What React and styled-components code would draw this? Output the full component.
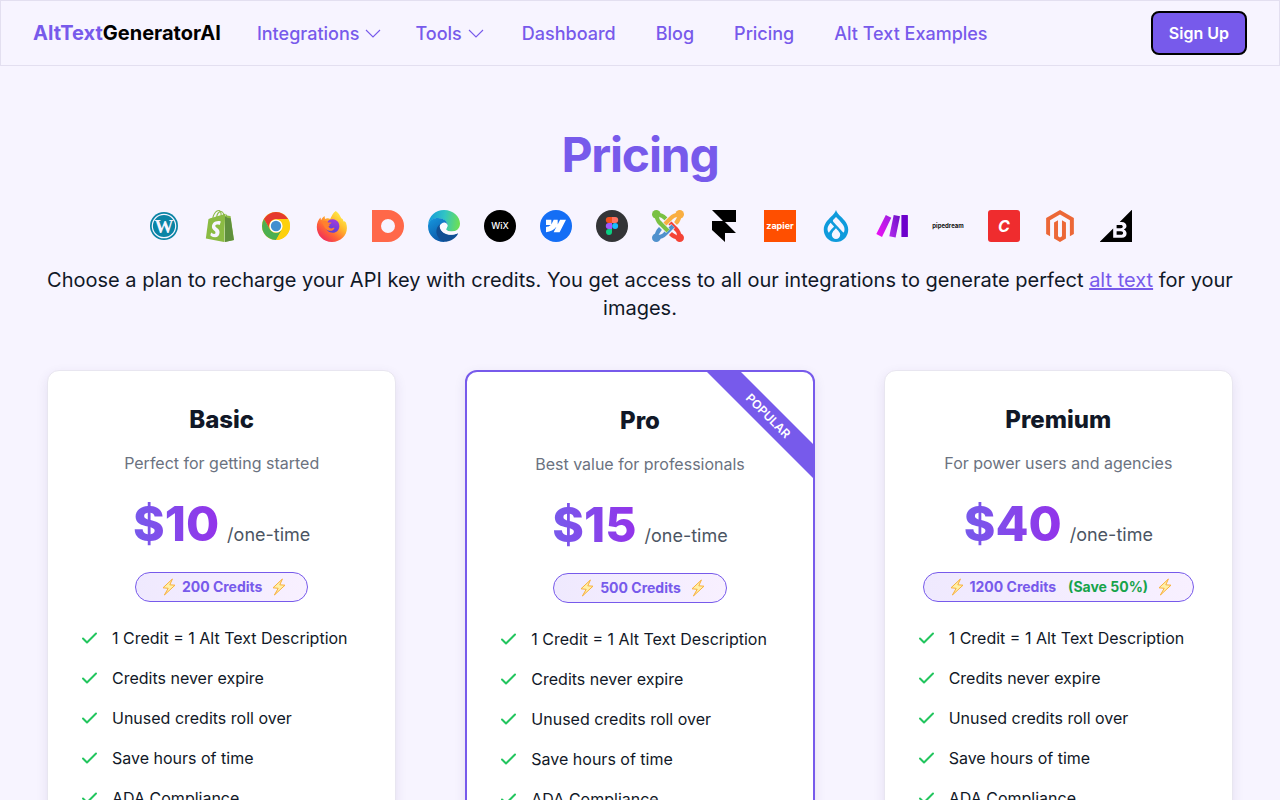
import React from 'react';
import styled, { createGlobalStyle } from 'styled-components';
import { SiShopify, SiWebflow, SiDrupal, SiBigcommerce } from 'react-icons/si';
import { FaMagento } from 'react-icons/fa';

const features = [
	'1 Credit = 1 Alt Text Description',
	'Credits never expire',
	'Unused credits roll over',
	'Save hours of time',
	'ADA Compliance'
];

const plans = [
	{ name: 'Basic', tagline: 'Perfect for getting started', price: '$10', credits: '200 Credits' },
	{
		name: 'Pro',
		tagline: 'Best value for professionals',
		price: '$15',
		credits: '500 Credits',
		popular: true
	},
	{
		name: 'Premium',
		tagline: 'For power users and agencies',
		price: '$40',
		credits: '1200 Credits',
		save: '(Save 50%)'
	}
];

const Chevron = () => (
	<ChevronSvg viewBox="0 0 20 20" aria-hidden="true">
		<path d="M3 6 10 13 17 6" />
	</ChevronSvg>
);

const Check = () => (
	<CheckSvg viewBox="0 0 20 20" aria-hidden="true">
		<path d="M3 10.5 7 14.5 16 5.5" />
	</CheckSvg>
);

const Bolt = () => (
	<BoltSvg viewBox="0 0 14 18" aria-hidden="true">
		<path d="M10.4 1 1 9.8 6.2 10.3 2.4 17 13 7.2 7.8 6.8Z" />
	</BoltSvg>
);

const WordPress = () => (
	<svg viewBox="0 0 32 32">
		<circle cx="16" cy="16" r="14" fill="#0b84a5" />
		<circle cx="16" cy="16" r="11.7" fill="none" stroke="#f7f4ff" strokeWidth="1.2" />
		<text
			x="16"
			y="22.5"
			fill="#f7f4ff"
			fontFamily="Liberation Serif, serif"
			fontSize="19"
			fontWeight="700"
			textAnchor="middle"
		>
			W
		</text>
	</svg>
);

const Shopify = () => (
	<svg viewBox="0 0 32 32">
		<SiShopify size={32} color="#8bbb43" />
		<path d="M21 5.9 23.6 8 26.6 8.3 29.9 29.9 21 31.9Z" fill="#5f8f3d" />
	</svg>
);

const Chrome = () => (
	<svg viewBox="0 0 32 32">
		<circle cx="16" cy="16" r="14" fill="#fbc60b" />
		<path d="M3.9 9A14 14 0 0 1 28.1 9L16 9A7 7 0 0 0 10 19.5Z" fill="#e53a2e" />
		<path d="M3.9 9 10 19.5A7 7 0 0 0 22 19.5L16 30A14 14 0 0 1 3.9 9Z" fill="#4caf50" />
		<path d="M16 9H28.1A14 14 0 0 1 16 30L22 19.5A7 7 0 0 0 16 9Z" fill="#fdd00c" />
		<circle cx="16" cy="16" r="6.6" fill="#fff" />
		<circle cx="16" cy="16" r="5.2" fill="#438fcf" />
	</svg>
);

const Firefox = () => (
	<svg viewBox="0 0 32 32">
		<defs>
			<linearGradient id="fox-body" x1="0.85" y1="0.1" x2="0.15" y2="0.95">
				<stop offset="0" stopColor="#fff04a" />
				<stop offset="0.35" stopColor="#ffb52c" />
				<stop offset="0.65" stopColor="#ff6636" />
				<stop offset="1" stopColor="#ee2560" />
			</linearGradient>
			<linearGradient id="fox-globe" x1="0.7" y1="0" x2="0.3" y2="1">
				<stop offset="0" stopColor="#a63bdc" />
				<stop offset="1" stopColor="#5340d5" />
			</linearGradient>
		</defs>
		<path
			d="M19.8 1C23 3 24 6 25.3 8.2C26.6 8.6 27.3 9.7 27.4 11.4C29 10.9 29.7 12 30.2 13.5C33.2 23 26.4 32 16 32C7.3 32 .8 25.3.8 17C.8 12.8 2.5 9.8 4.5 7.6L5 10.2C6.4 7.4 8 6.3 8.6 6L9 8.9C11 8 12.8 8.1 14.2 9C15.7 5.8 17 2.8 19.8 1Z"
			fill="url(#fox-body)"
		/>
		<path
			d="M11 13.2C11.6 10.4 14 9 17 9.3C20.9 9.7 23.5 12.6 23.4 16.3C23.3 20.1 20.4 22.8 16.8 22.8C12.8 22.8 10 20.2 9.4 16.6L14 15.8Z"
			fill="url(#fox-globe)"
		/>
		<path
			d="M5.5 12C8 10.5 10.6 11.1 12 12.4L15.6 12.5C15.3 13.9 13.2 14.2 12.7 15C12 16.3 13.2 18.6 15.4 18.4C17 18.2 17.6 17.6 18.6 18C17.6 20.4 15 21.4 12.4 20.6C8.4 19.2 8.2 15 5.5 12Z"
			fill="#ff812e"
		/>
	</svg>
);

const Disc = () => (
	<svg viewBox="0 0 32 32">
		<path
			d="M0 0H16A16 16 0 0 1 16 32H0ZM16 9A7 7 0 1 0 16 23A7 7 0 0 0 16 9Z"
			fill="#ff6849"
			fillRule="evenodd"
		/>
	</svg>
);

const Edge = () => (
	<svg viewBox="0 0 32 32">
		<defs>
			<linearGradient id="edge-top" x1="0" y1="0.4" x2="1" y2="0.5">
				<stop offset="0" stopColor="#159bdb" />
				<stop offset="0.5" stopColor="#31c4c4" />
				<stop offset="1" stopColor="#6ee052" />
			</linearGradient>
			<linearGradient id="edge-left" x1="0" y1="0" x2="0.5" y2="1">
				<stop offset="0" stopColor="#1698df" />
				<stop offset="1" stopColor="#0b58a8" />
			</linearGradient>
		</defs>
		<path
			d="M.2 14C1 6 7.6 0 16 0C25.3 0 32 6.8 32 13.4C32 18.5 28.3 21.5 23.4 21.5C19.8 21.5 18.1 20.4 18.1 19.2C18.1 18.2 19.5 17.8 19.5 15.6C19.5 11.6 15.5 8.2 10.2 8.2C5.4 8.2 1.8 10.8.2 14Z"
			fill="url(#edge-top)"
		/>
		<path
			d="M.1 15C1.1 10.7 5.2 8.1 10 8.1C15.3 8.1 19.2 11 19.5 15C17.8 12 13.7 12.3 11.4 15.5C8.2 20 10.3 28.7 17.6 31.9C7.8 32.8-.8 25.2.1 15Z"
			fill="url(#edge-left)"
		/>
		<path
			d="M12.6 14C9.2 15.8 7.3 20.4 9.1 25.1C10.8 29.4 14.5 32 18.2 31.8C23.5 31 27.7 28.2 29.9 24.1C30.3 23.3 29.8 23 29.1 23.3C22.4 26.3 14 23.3 12.1 18.2C11.5 16.5 11.7 15.1 12.6 14Z"
			fill="#104f94"
		/>
		<path
			d="M12.2 17C12.4 13.6 15.2 12 17.4 12.8C19.4 13.6 19.9 15.8 19 17.4C18.2 18.6 17.7 19.3 18.7 20.2C21 22 26.4 21.8 31 19.8C30.7 21.4 30.3 22.4 29.8 23.2C22 27 12.4 23.8 12.2 17Z"
			fill="#fbf9ff"
		/>
	</svg>
);

const Figma = () => (
	<svg viewBox="0 0 32 32">
		<circle cx="16" cy="16" r="16" fill="#333437" />
		<path d="M16 7H12.8A3 3 0 0 0 12.8 13H16Z" fill="#f24e1e" />
		<path d="M16 7H19.2A3 3 0 0 1 19.2 13H16Z" fill="#ff7262" />
		<path d="M16 13H12.8A3 3 0 0 0 12.8 19H16Z" fill="#a259ff" />
		<circle cx="19.1" cy="16" r="3" fill="#1abcfe" />
		<path d="M16 19H12.8A3 3 0 1 0 16 22Z" fill="#0acf83" />
	</svg>
);

const joomlaArms = [
	['M4.5 4.5C11 5 11.6 6.6 14 9', '#7ac143'],
	['M4.5 27.5C5 21 6.6 20.4 8.5 18.5', '#5091cd'],
	['M27.5 27.5C21 27 20.4 25.4 18.5 23.5', '#f44336'],
	['M27.5 4.5C27 11 25.4 11.6 23.5 13.5', '#f9ae41'],
	['M27.5 27.5C27 21 25.4 20.4 23 18L16 11', '#f44336'],
	['M4.5 27.5C11 27 11.6 25.4 14 23L21 16', '#5091cd'],
	['M27.5 4.5C21 5 20.4 6.6 18 9L11 16', '#f9ae41'],
	['M4.5 4.5C5 11 6.6 11.6 9 14L16 21', '#7ac143']
];

const Joomla = () => (
	<svg viewBox="0 0 32 32" fill="none">
		{joomlaArms.map(([d, color]) => (
			<g key={d}>
				<path d={d} stroke="#f7f4ff" strokeWidth="5.4" />
				<path d={d} stroke={color} strokeWidth="4.2" />
			</g>
		))}
		<circle cx="4.3" cy="4.3" r="4.3" fill="#7ac143" />
		<circle cx="27.7" cy="4.3" r="4.3" fill="#f9ae41" />
		<circle cx="27.7" cy="27.7" r="4.3" fill="#f44336" />
		<circle cx="4.3" cy="27.7" r="4.3" fill="#5091cd" />
	</svg>
);

const Framer = () => (
	<svg viewBox="0 0 32 32">
		<path d="M4 0H28V12H16ZM4 11H16L28 23H17V32L4 20Z" fill="#000" />
	</svg>
);

const Make = () => (
	<svg viewBox="0 0 32 32">
		<defs>
			<linearGradient id="make-a" x1="0" y1="1" x2="1" y2="0">
				<stop offset="0" stopColor="#f10ef5" />
				<stop offset="1" stopColor="#9b1fe0" />
			</linearGradient>
			<linearGradient id="make-b" x1="0" y1="1" x2="1" y2="0">
				<stop offset="0" stopColor="#b52cf0" />
				<stop offset="1" stopColor="#6b0fc4" />
			</linearGradient>
		</defs>
		<path d="M9.8 5 15.3 7.8 6 27 .3 24Z" fill="url(#make-a)" />
		<path d="M17.7 5 24 6.2 19.6 27.6 13.3 26.3Z" fill="url(#make-b)" />
		<rect x="25.4" y="5" width="6.5" height="22" rx="0.5" fill="#6d00cc" />
	</svg>
);

const integrations = [
	{ name: 'WordPress', art: <WordPress /> },
	{ name: 'Shopify', art: <Shopify /> },
	{ name: 'Chrome', art: <Chrome /> },
	{ name: 'Firefox', art: <Firefox /> },
	{ name: 'Disc', art: <Disc /> },
	{ name: 'Edge', art: <Edge /> },
	{ name: 'Wix', word: 'WiX', bg: '#000', round: '50%', size: 9, weight: 500 },
	{ name: 'Webflow', art: <SiWebflow color="#fff" size={20} />, bg: '#146ef5', round: '50%' },
	{ name: 'Figma', art: <Figma /> },
	{ name: 'Joomla', art: <Joomla /> },
	{ name: 'Framer', art: <Framer /> },
	{ name: 'Zapier', word: 'zapier', bg: '#ff4f00', size: 9, weight: 700 },
	{ name: 'Drupal', art: <SiDrupal color="#0f9bdc" size={32} /> },
	{ name: 'Make', art: <Make /> },
	{ name: 'Pipedream', word: 'pipedream', ink: '#111', size: 6, weight: 700 },
	{ name: 'Craft', word: 'C', bg: '#ef2c2e', round: '3px', size: 16, weight: 700, italic: true },
	{ name: 'Magento', art: <FaMagento color="#ec6737" size={32} /> },
	{ name: 'BigCommerce', art: <SiBigcommerce color="#000" size={32} /> }
];

const Plan = ({ plan }) => (
	<Card $popular={plan.popular}>
		{plan.popular && (
			<RibbonCorner>
				<Ribbon>POPULAR</Ribbon>
			</RibbonCorner>
		)}
		<PlanName>{plan.name}</PlanName>
		<Tagline>{plan.tagline}</Tagline>
		<PriceRow>
			<Price>{plan.price}</Price>
			<Period>/one-time</Period>
		</PriceRow>
		<Credits>
			<Bolt />
			<span>{plan.credits}</span>
			{plan.save && <Save>{plan.save}</Save>}
			<BoltEnd>
				<Bolt />
			</BoltEnd>
		</Credits>
		<FeatureList>
			{features.map((feature) => (
				<Feature key={feature}>
					<Check />
					{feature}
				</Feature>
			))}
		</FeatureList>
	</Card>
);

const App = () => (
	<>
		<GlobalStyle />
		<Header>
			<Logo href="#">
				<LogoAccent>AltText</LogoAccent>GeneratorAI
			</Logo>
			<Nav>
				<NavButton type="button">
					Integrations
					<Chevron />
				</NavButton>
				<NavButton type="button">
					Tools
					<Chevron />
				</NavButton>
				<NavLink href="#">Dashboard</NavLink>
				<NavLink href="#">Blog</NavLink>
				<NavLink href="#">Pricing</NavLink>
				<NavLink href="#">Alt Text Examples</NavLink>
			</Nav>
			<SignUp type="button">Sign Up</SignUp>
		</Header>
		<Main>
			<Title>Pricing</Title>
			<Integrations>
				{integrations.map(({ name, art, word, bg, ink, round, size, weight, italic }) => (
					<Tile
						key={name}
						$bg={bg}
						$ink={ink}
						$round={round}
						$size={size}
						$weight={weight}
						$italic={italic}
					>
						{art || word}
					</Tile>
				))}
			</Integrations>
			<Intro>
				Choose a plan to recharge your API key with credits. You get access to all our
				integrations to generate perfect <a href="#">alt text</a> for your images.
			</Intro>
			<Plans>
				{plans.map((plan) => (
					<Plan key={plan.name} plan={plan} />
				))}
			</Plans>
		</Main>
	</>
);

export default App;

const GlobalStyle = createGlobalStyle`
	*, *::before, *::after {
		box-sizing: border-box;
	}

	body {
		margin: 0;
		background: #f7f4ff;
		color: #111827;
		font-family: Inter, "Liberation Sans", sans-serif;
		font-size: 16px;
		line-height: 24px;
	}

	h1, h2, p, ul {
		margin: 0;
		padding: 0;
	}

	button {
		font-family: inherit;
		cursor: pointer;
	}
`;

const Header = styled.header`
	display: flex;
	align-items: center;
	padding: 10px 32px;
	border: 1px solid #e3dff0;
`;

const Logo = styled.a`
	color: #000;
	font-size: 20px;
	font-weight: 700;
	line-height: 28px;
	text-decoration: none;
`;

const LogoAccent = styled.span`
	color: #775aeb;
`;

const Nav = styled.nav`
	display: flex;
	align-items: center;
	flex-grow: 1;
	gap: 32px;
	padding-top: 2px;
	margin-left: 36px;
`;

const NavButton = styled.button`
	display: flex;
	align-items: center;
	gap: 4px;
	padding: 0;
	border: none;
	background: none;
	color: #775aeb;
	font-size: 18px;
	font-weight: 500;
	line-height: 28px;
`;

const NavLink = styled.a`
	padding: 0 4px;
	color: #775aeb;
	font-size: 18px;
	font-weight: 500;
	line-height: 28px;
	text-decoration: none;
`;

const ChevronSvg = styled.svg`
	width: 20px;
	height: 20px;
	fill: none;
	stroke: currentColor;
	stroke-width: 1.1;
`;

const SignUp = styled.button`
	padding: 8px 16px;
	border: 2px solid #000;
	border-radius: 8px;
	background: #775aeb;
	color: #fff;
	font-size: 16px;
	font-weight: 600;
	line-height: 24px;
`;

const Main = styled.main`
	padding: 64px 47px 48px;
`;

const Title = styled.h1`
	color: #775aeb;
	font-size: 48px;
	font-weight: 700;
	line-height: 50px;
	letter-spacing: -0.025em;
	text-align: center;
`;

const Integrations = styled.div`
	display: flex;
	flex-wrap: wrap;
	justify-content: center;
	gap: 24px;
	margin: 30px 0 24px;
`;

const Tile = styled.div`
	display: flex;
	align-items: center;
	justify-content: center;
	width: 32px;
	height: 32px;
	border-radius: ${({ $round }) => $round || 0};
	background: ${({ $bg }) => $bg || 'none'};
	color: ${({ $ink }) => $ink || '#fff'};
	font-size: ${({ $size }) => $size || 16}px;
	font-weight: ${({ $weight }) => $weight || 400};
	font-style: ${({ $italic }) => ($italic ? 'italic' : 'normal')};
	line-height: 16px;

	svg {
		flex-shrink: 0;
	}
`;

const Intro = styled.p`
	font-size: 20px;
	line-height: 28px;
	text-align: center;

	a {
		color: #775aeb;
	}
`;

const Plans = styled.div`
	display: grid;
	grid-template-columns: repeat(3, 1fr);
	gap: 69px;
	margin-top: 48px;

	@media (max-width: 1100px) {
		grid-template-columns: 1fr;
		gap: 32px;
	}
`;

const Card = styled.section`
	position: relative;
	display: flex;
	flex-direction: column;
	align-items: center;
	padding: 32px;
	border: ${({ $popular }) => ($popular ? '2px solid #775aeb' : '1px solid #e8e6f0')};
	border-radius: 12px;
	background: #fff;
	box-shadow: 0 4px 12px rgba(60, 40, 120, 0.1);
`;

const RibbonCorner = styled.div`
	position: absolute;
	top: 0;
	right: 0;
	width: 112px;
	height: 112px;
	overflow: hidden;
	border-top-right-radius: 10px;
`;

const Ribbon = styled.div`
	position: absolute;
	top: 32px;
	right: -40px;
	width: 170px;
	background: #775aeb;
	color: #fff;
	font-size: 12px;
	font-weight: 600;
	line-height: 24px;
	text-align: center;
	transform: rotate(45deg);
`;

const PlanName = styled.h2`
	font-size: 24px;
	font-weight: 800;
	line-height: 34px;
`;

const Tagline = styled.p`
	margin-top: 14px;
	color: #6b7280;
`;

const PriceRow = styled.div`
	display: flex;
	align-items: baseline;
	gap: 8px;
	margin: 24px 0 23px;
`;

const Price = styled.span`
	background: linear-gradient(to right, #775aeb, #9333ea);
	background-clip: text;
	color: transparent;
	font-size: 48px;
	font-weight: 800;
	line-height: 50px;
`;

const Period = styled.span`
	color: #4b5563;
	font-size: 18px;
	line-height: 28px;
`;

const Credits = styled.div`
	display: flex;
	align-items: center;
	gap: 6px;
	padding: 4px 21px 4px 26px;
	border: 1px solid #775aeb;
	border-radius: 15px;
	background: linear-gradient(to right, #efe9fe, #f8f0ff);
	color: #775aeb;
	font-size: 14px;
	font-weight: 700;
	line-height: 20px;
`;

const Save = styled.span`
	margin-left: 6px;
	color: #16a34a;
`;

const BoltEnd = styled.span`
	display: flex;
	margin-left: 4px;
`;

const BoltSvg = styled.svg`
	width: 14px;
	height: 18px;
	fill: #fff0a8;
	stroke: #f8b13c;
	stroke-width: 1;
	stroke-linejoin: round;
`;

const FeatureList = styled.ul`
	display: flex;
	flex-direction: column;
	align-self: stretch;
	gap: 16px;
	margin-top: 24px;
	list-style: none;
`;

const Feature = styled.li`
	display: flex;
	align-items: center;
	gap: 12px;
`;

const CheckSvg = styled.svg`
	flex-shrink: 0;
	width: 20px;
	height: 20px;
	fill: none;
	stroke: #22c55e;
	stroke-width: 2;
	stroke-linecap: round;
	stroke-linejoin: round;
`;
